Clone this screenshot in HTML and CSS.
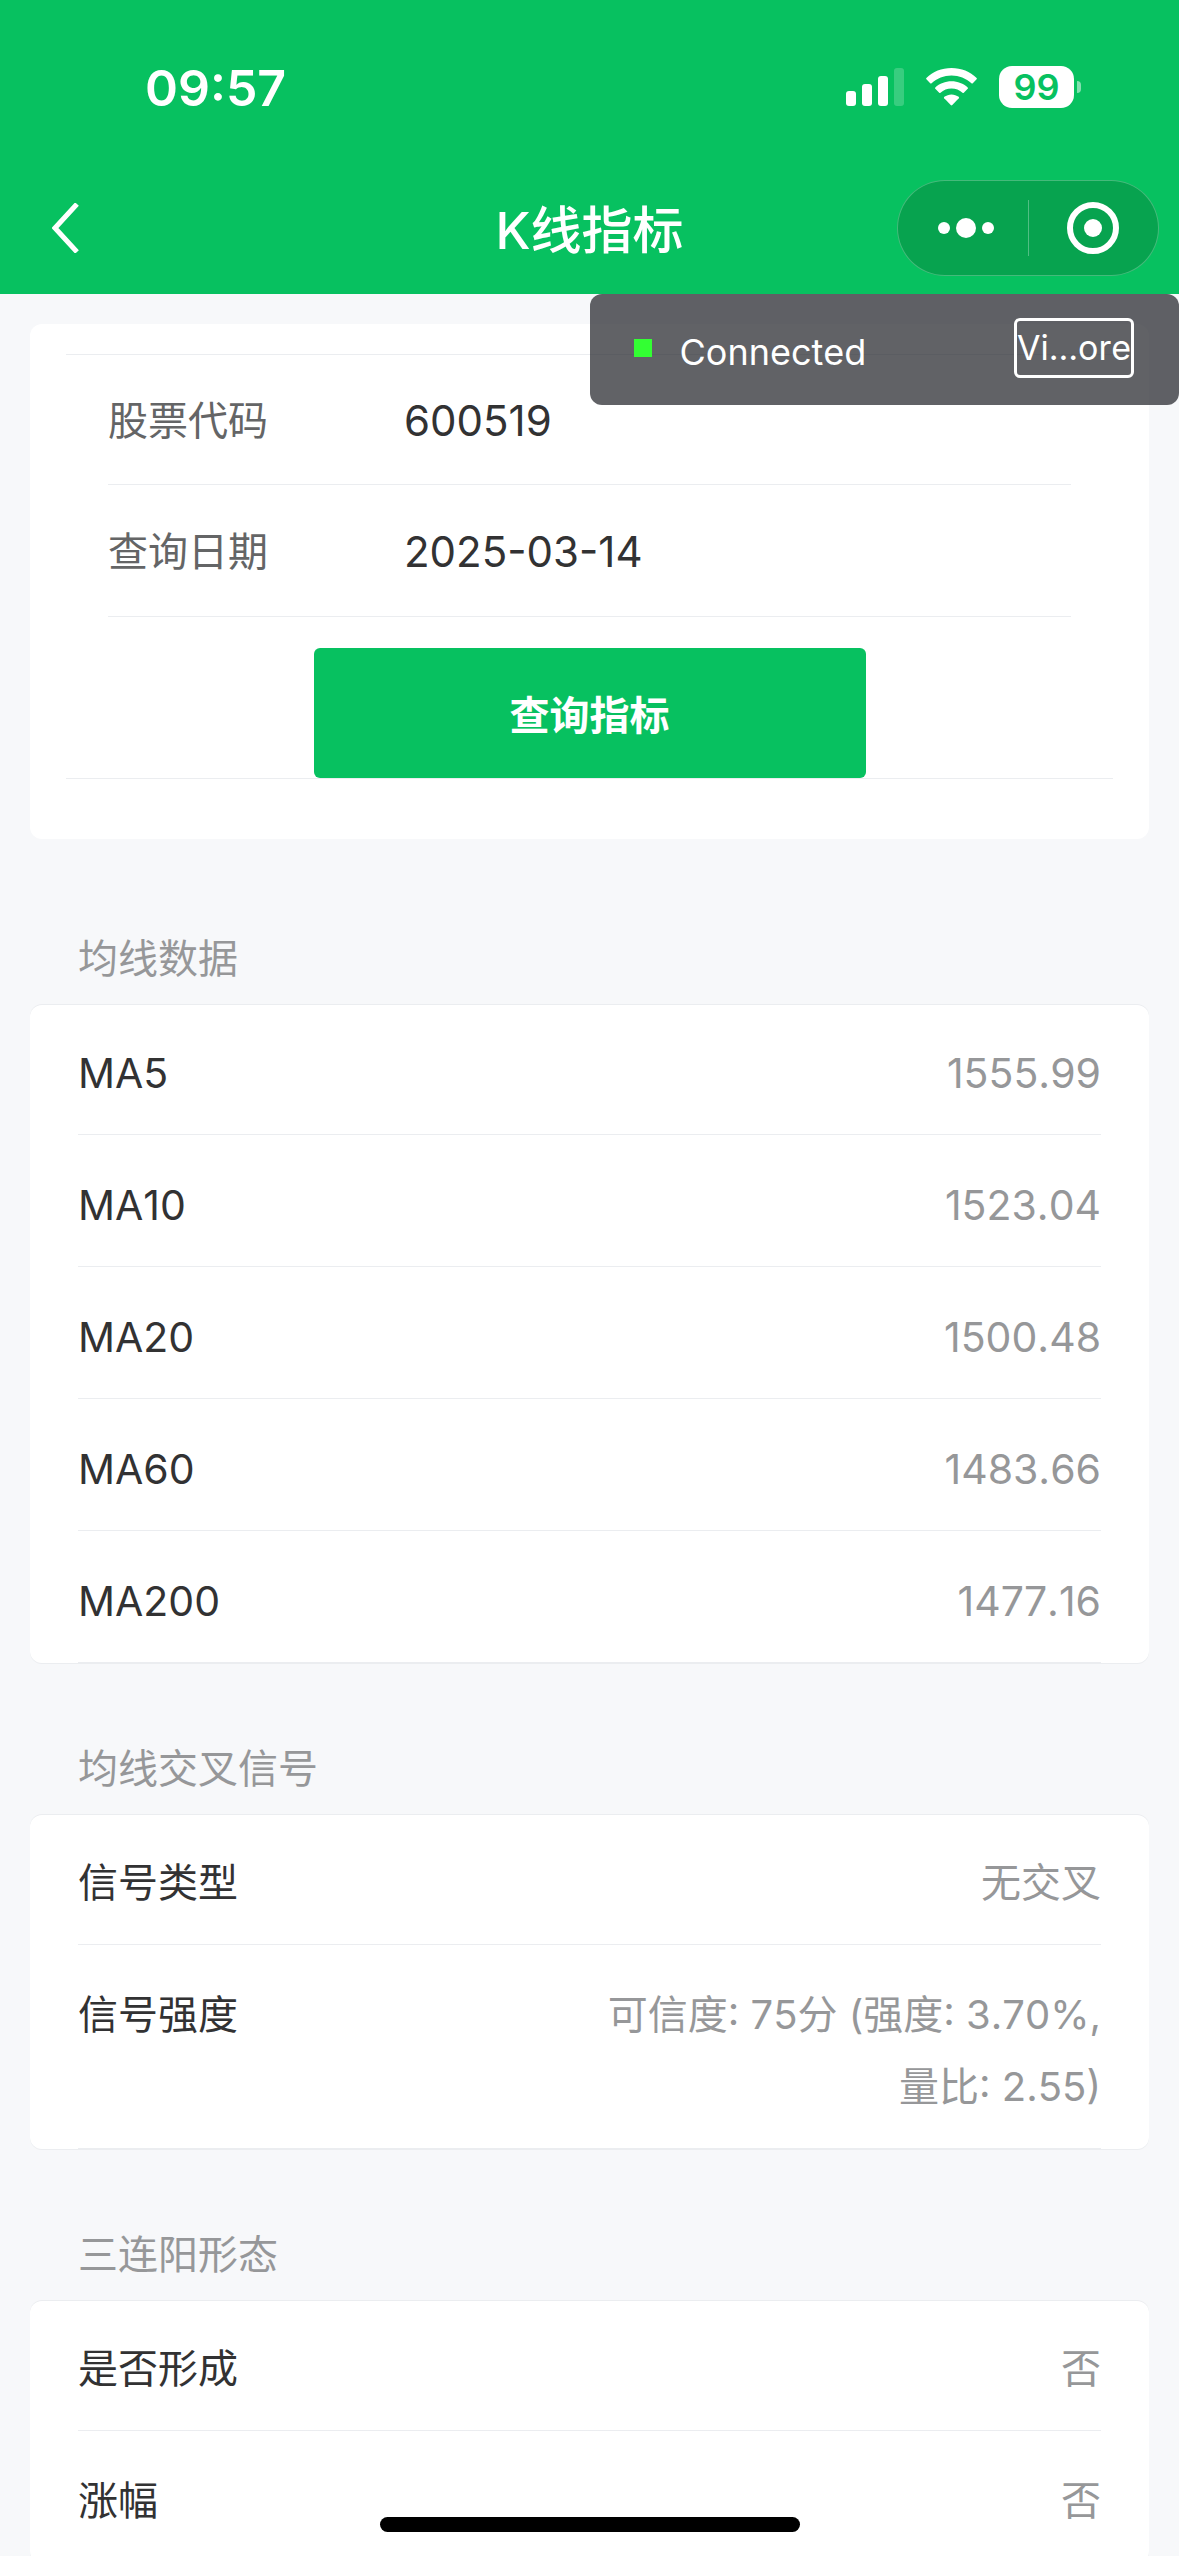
FILE: index.html
```html
<!DOCTYPE html>
<html lang="zh-CN">
<head>
<meta charset="utf-8">
<meta name="viewport" content="width=device-width, initial-scale=1">
<title>K线指标</title>
<link rel="stylesheet" href="styles.css">
</head>
<body>
<div class="app">
  <header class="header">
    <div class="status">
      <span class="status-time">09:57</span>
      <div class="status-icons">
        <svg class="icon-signal" viewBox="0 0 58 38" aria-hidden="true">
          <rect x="0" y="23" width="10" height="15" rx="3"/>
          <rect x="16" y="16" width="10" height="22" rx="3"/>
          <rect x="32" y="8" width="10" height="30" rx="3"/>
          <rect x="48" y="0" width="10" height="38" rx="3" opacity=".2"/>
        </svg>
        <svg class="icon-wifi" viewBox="0 0 51 38" aria-hidden="true">
          <path d="M25.500 0C35.300 0 44.200 3.700 50.600 9.900Q51.200 10.600 50.600 11.300L46.800 15.200Q46.100 15.800 45.400 15.200C40.100 10.300 33.100 7.400 25.500 7.400S10.900 10.300 5.600 15.200Q4.900 15.800 4.200 15.200L.4 11.300Q-.2 10.600.4 9.900C6.800 3.700 15.700 0 25.500 0Z"/>
          <path d="M25.500 13.200C31.700 13.200 37.400 15.500 41.700 19.400Q42.400 20 41.700 20.700L37.800 24.700Q37.200 25.300 36.500 24.700C33.500 22.100 29.700 20.500 25.500 20.500S17.500 22.100 14.500 24.700Q13.800 25.300 13.200 24.700L9.300 20.700Q8.600 20 9.300 19.400C13.600 15.500 19.300 13.200 25.500 13.200Z"/>
          <path d="M25.500 26.400C28.100 26.400 30.700 27.300 32.700 28.800Q33.500 29.500 32.800 30.300L26.300 37.100Q25.500 37.800 24.700 37.100L18.200 30.300Q17.500 29.500 18.300 28.800C20.300 27.300 22.900 26.400 25.500 26.400Z"/>
        </svg>
        <div class="battery">
          <span class="battery-level">99</span>
          <span class="battery-cap"></span>
        </div>
      </div>
    </div>
    <nav class="nav">
      <button class="back" type="button" aria-label="返回">
        <svg viewBox="0 0 28 50" aria-hidden="true"><path d="M25 1 3 25l22 24"/></svg>
      </button>
      <h1 class="nav-title">K线指标</h1>
      <div class="capsule">
        <button class="capsule-btn" type="button" aria-label="更多">
          <svg class="icon-more" viewBox="0 0 58 22" aria-hidden="true"><circle cx="7" cy="11" r="6"/><circle cx="29" cy="11" r="10"/><circle cx="51" cy="11" r="6"/></svg>
        </button>
        <span class="capsule-line"></span>
        <button class="capsule-btn" type="button" aria-label="关闭">
          <svg class="icon-close" viewBox="0 0 52 52" aria-hidden="true"><circle cx="26" cy="26" r="23"/><circle class="dot" cx="26" cy="26" r="9"/></svg>
        </button>
      </div>
    </nav>
  </header>

  <main class="content">
    <form class="card">
      <div class="fields">
        <div class="field">
          <label class="field-label" for="code">股票代码</label>
          <input class="field-input" id="code" type="text" value="600519">
        </div>
        <div class="field">
          <label class="field-label" for="date">查询日期</label>
          <input class="field-input" id="date" type="text" value="2025-03-14">
        </div>
        <button class="submit" type="button">查询指标</button>
      </div>
    </form>

    <section>
      <h2 class="group-title">均线数据</h2>
      <dl class="group numbers">
        <div class="cell"><dt>MA5</dt><dd>1555.99</dd></div>
        <div class="cell"><dt>MA10</dt><dd>1523.04</dd></div>
        <div class="cell"><dt>MA20</dt><dd>1500.48</dd></div>
        <div class="cell"><dt>MA60</dt><dd>1483.66</dd></div>
        <div class="cell"><dt>MA200</dt><dd>1477.16</dd></div>
      </dl>
    </section>

    <section>
      <h2 class="group-title">均线交叉信号</h2>
      <dl class="group">
        <div class="cell"><dt>信号类型</dt><dd>无交叉</dd></div>
        <div class="cell"><dt>信号强度</dt><dd>可信度: 75分 (强度: 3.70%, 量比: 2.55)</dd></div>
      </dl>
    </section>

    <section>
      <h2 class="group-title">三连阳形态</h2>
      <dl class="group">
        <div class="cell"><dt>是否形成</dt><dd>否</dd></div>
        <div class="cell"><dt>涨幅</dt><dd>否</dd></div>
      </dl>
    </section>
  </main>

  <div class="debug">
    <span class="debug-light"></span>
    <span class="debug-text">Connected</span>
    <button class="debug-btn" type="button">Vi…ore</button>
  </div>
  <div class="home-bar"></div>
</div>
</body>
</html>
```
FILE: styles.css
```css
* {
  box-sizing: border-box;
}

body {
  margin: 0;
  background: #f7f8fa;
  color: #323233;
  font-family: Inter, "Noto Sans CJK SC", sans-serif;
  font-size: 40px;
  font-kerning: none;
  line-height: 72px;
}

button,
input {
  margin: 0;
  padding: 0;
  border: 0;
  background: none;
  color: inherit;
  font: inherit;
}

svg {
  display: block;
}

.app {
  position: relative;
  display: flex;
  flex-direction: column;
  height: 100vh;
  overflow: hidden;
}

/* Header */
.header {
  flex: none;
  background: #07c160;
  color: #fff;
}

.status {
  display: flex;
  align-items: center;
  justify-content: space-between;
  height: 162px;
  padding: 12px 98px 0 145px;
}

.status-time {
  padding-top: 2px;
  font-size: 50px;
  font-weight: 600;
}

.status-icons {
  display: flex;
  align-items: center;
  gap: 22px;
  fill: #fff;
}

.icon-signal {
  width: 58px;
  height: 38px;
}

.icon-wifi {
  width: 51px;
  height: 38px;
}

.battery {
  display: flex;
  align-items: center;
  gap: 3px;
}

.battery-level {
  width: 75px;
  height: 42px;
  border-radius: 13px;
  background: #fff;
  color: #07c160;
  font-size: 36px;
  font-weight: 600;
  line-height: 43px;
  text-align: center;
}

.battery-cap {
  width: 4px;
  height: 12px;
  border-radius: 0 4px 4px 0;
  background: rgba(255, 255, 255, .5);
}

.nav {
  display: grid;
  grid-template-columns: 1fr auto 1fr;
  align-items: center;
  height: 132px;
  padding: 0 20px 0 52px;
}

.back svg {
  width: 28px;
  height: 50px;
  fill: none;
  stroke: #fff;
  stroke-width: 5;
}

.nav-title {
  margin: 0;
  padding: 6px 32px 0 0;
  font-size: 51px;
  font-weight: 500;
}

.capsule {
  display: flex;
  align-items: center;
  justify-self: end;
  width: 262px;
  height: 96px;
  border: 1px solid rgba(255, 255, 255, .25);
  border-radius: 48px;
  background: #07a34f;
}

.capsule-btn {
  display: flex;
  align-items: center;
  justify-content: center;
  width: 50%;
  height: 100%;
}

.capsule-btn:first-child {
  padding-left: 6px;
}

.capsule-line {
  width: 1px;
  height: 56px;
  background: rgba(255, 255, 255, .3);
}

.icon-more {
  width: 58px;
  height: 22px;
  fill: #fff;
}

.icon-close {
  width: 52px;
  height: 52px;
  fill: none;
  stroke: #fff;
  stroke-width: 6;
}

.icon-close .dot {
  fill: #fff;
  stroke: none;
}

/* Content */
.content {
  flex: 1;
  min-height: 0;
  padding: 30px 30px 0;
  overflow: hidden;
}

.card {
  margin-bottom: 14px;
  padding: 30px 36px 60px;
  border-radius: 12px;
  background: #fff;
}

.fields {
  padding: 0 42px;
  border: 1px solid #ebedf0;
  border-width: 1px 0;
}

.field {
  display: flex;
  align-items: center;
  height: 132px;
  padding-top: 3px;
  border-bottom: 1px solid #ebedf0;
}

.field:first-child {
  height: 130px;
}

.field-label {
  width: 296px;
  color: #646566;
}

.field-input {
  flex: 1;
  min-width: 0;
  font-size: 42px;
}

.submit {
  display: block;
  width: 552px;
  max-width: 100%;
  height: 130px;
  margin: 31px auto 0;
  padding-top: 6px;
  border-radius: 6px;
  background: #07c160;
  color: #fff;
  font-weight: 700;
}

.group-title {
  margin: 0;
  padding: 82px 48px 22px;
  color: #969799;
  font-size: 40px;
  font-weight: 400;
  line-height: 48px;
}

.group {
  margin: 0;
  padding: 0 48px;
  border-radius: 12px;
  background: #fff;
  box-shadow: 0 -1px #ebedf0, 0 1px #ebedf0;
}

.numbers {
  font-size: 41px;
}

.cell {
  display: flex;
  justify-content: space-between;
  padding: 34px 0 25px;
  border-bottom: 1px solid #ebedf0;
}

.cell:first-child {
  padding-top: 32px;
}

.cell dd {
  max-width: 512px;
  margin: 0;
  color: #969799;
  text-align: right;
}

/* Overlays */
.debug {
  position: absolute;
  top: 294px;
  right: 0;
  display: flex;
  align-items: flex-start;
  width: 50%;
  height: 111px;
  padding: 24px 45px 0 44px;
  border-radius: 12px;
  background: rgba(30, 31, 37, .7);
  color: #fff;
  font-size: 36px;
  line-height: 68px;
}

.debug-light {
  width: 18px;
  height: 18px;
  margin-top: 21px;
  background: #3f3;
}

.debug-text {
  flex: 1;
  padding-left: 28px;
}

.debug-btn {
  width: 120px;
  height: 60px;
  border: 3px solid #fff;
  border-radius: 6px;
  font-size: 34px;
  line-height: 54px;
  white-space: nowrap;
}

.home-bar {
  position: absolute;
  bottom: 24px;
  left: 50%;
  width: 420px;
  height: 15px;
  margin-left: -210px;
  border-radius: 8px;
  background: #000;
}
```
